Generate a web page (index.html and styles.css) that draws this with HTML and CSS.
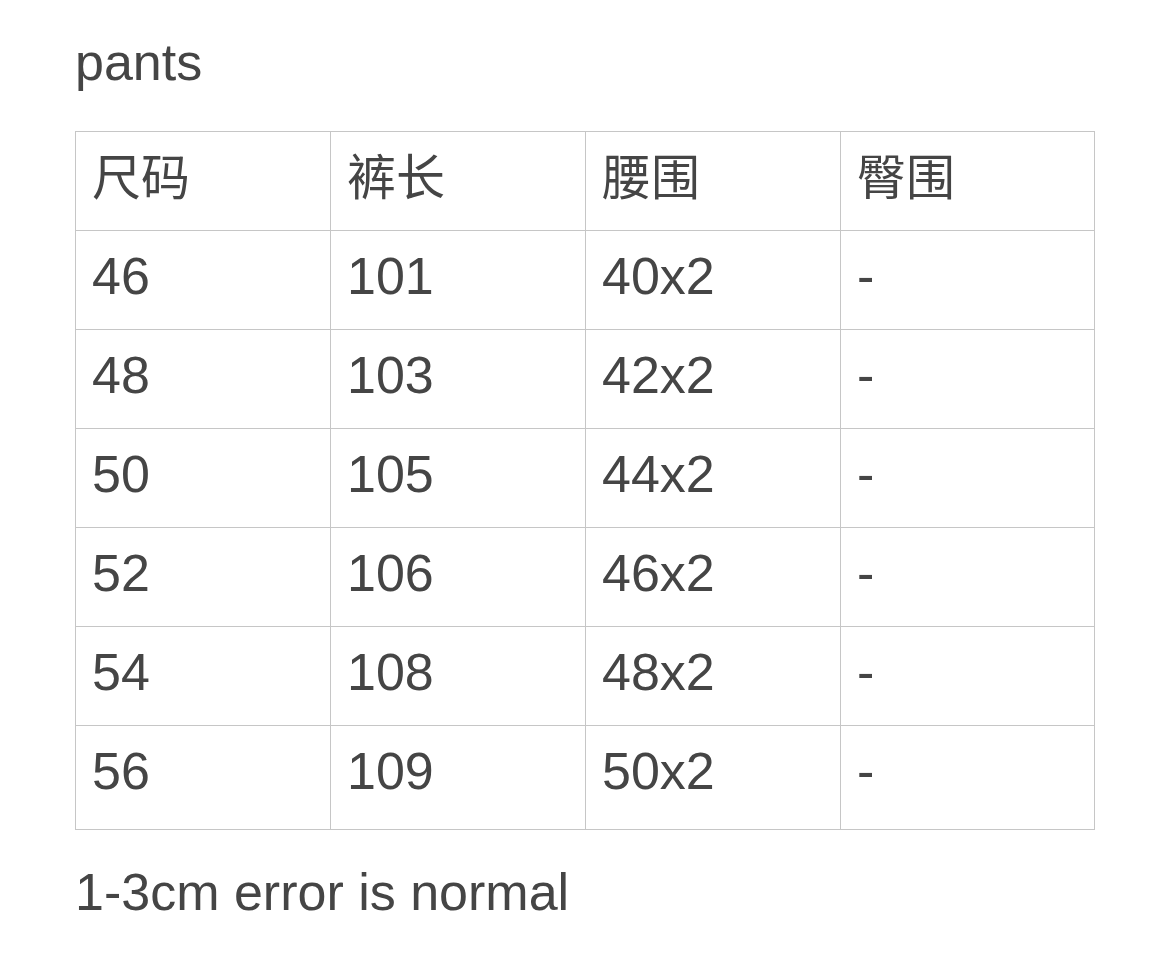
FILE: index.html
```html
<!DOCTYPE html>
<html lang="zh">
<head>
<meta charset="utf-8">
<link rel="stylesheet" href="styles.css">
</head>
<body>
<main class="page">
  <h1 class="title">pants</h1>
  <table class="sizes">
    <colgroup><col class="c"><col class="c"><col class="c"><col class="c last-col"></colgroup>
    <thead>
      <tr><th>尺码</th><th>裤长</th><th>腰围</th><th>臀围</th></tr>
    </thead>
    <tbody>
      <tr><td>46</td><td>101</td><td>40x2</td><td>-</td></tr>
      <tr><td>48</td><td>103</td><td>42x2</td><td>-</td></tr>
      <tr><td>50</td><td>105</td><td>44x2</td><td>-</td></tr>
      <tr><td>52</td><td>106</td><td>46x2</td><td>-</td></tr>
      <tr><td>54</td><td>108</td><td>48x2</td><td>-</td></tr>
      <tr class="last"><td>56</td><td>109</td><td>50x2</td><td>-</td></tr>
    </tbody>
  </table>
  <p class="note">1-3cm error is normal</p>
</main>
</body>
</html>
```
FILE: styles.css
```css
html, body {
  margin: 0;
  padding: 0;
  background: #ffffff;
}
body {
  font-family: "Liberation Sans", Arial, "Noto Sans CJK SC", sans-serif;
  color: #454545;
}
.page {
  padding: 31px 0 0 75px;
}
.title {
  margin: 0;
  font-size: 52px;
  font-weight: 400;
  line-height: 62px;
}
.sizes {
  margin-top: 38px;
  border-collapse: collapse;
  table-layout: fixed;
  width: 1019px;
}
.sizes .c {
  width: 255px;
}
.sizes .last-col {
  width: 254px;
}
.sizes th,
.sizes td {
  border: 1px solid #c6c6c6;
  padding: 15px 16px 23px 16px;
  font-size: 52px;
  line-height: 60px;
  height: 60px;
  font-weight: 400;
  text-align: left;
  vertical-align: top;
  box-sizing: content-box;
}
.sizes th {
  font-family: "Noto Sans CJK SC", sans-serif;
  font-size: 49px;
  padding-top: 12px;
  padding-bottom: 26px;
}
.sizes .last td {
  padding-bottom: 28px;
}
.note {
  margin: 31px 0 0 0;
  font-size: 52px;
  line-height: 62px;
}
```
